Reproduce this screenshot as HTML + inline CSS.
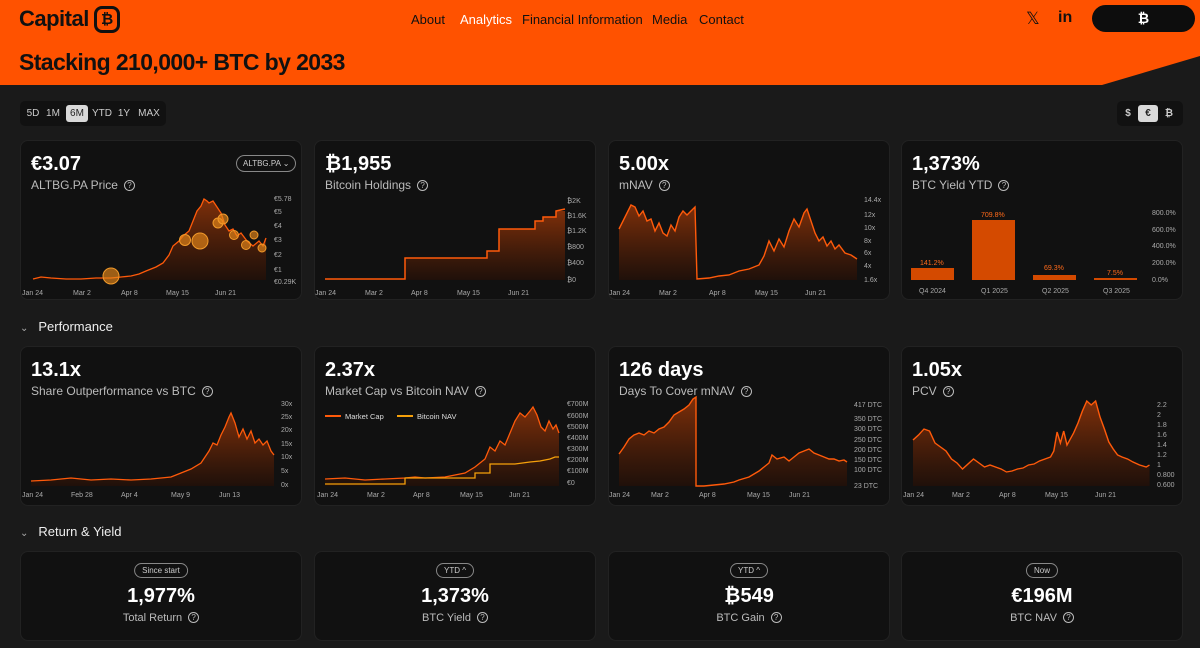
<!DOCTYPE html>
<html><head><meta charset="utf-8"><style>
*{box-sizing:border-box;margin:0;padding:0}
body{width:1200px;height:648px;overflow:hidden;background:#1a1a1a;font-family:"Liberation Sans",sans-serif;color:#fff;position:relative}
.hdr{position:absolute;left:0;top:0;width:1200px;height:85px;background:#ff5200;clip-path:polygon(0 0,1200px 0,1200px 56px,1102px 85px,0 85px)}
.logo{position:absolute;left:19px;top:5px;height:28px;display:flex;align-items:center;font-size:22px;font-weight:bold;color:#111;letter-spacing:-0.5px}
.logo b{display:inline-block;margin-left:5px;width:26px;height:27px;border:3px solid #111;border-radius:8px;text-align:center;font-size:15px;line-height:21px}
.nav{position:absolute;top:12px;font-size:13px;color:#111}
.title{position:absolute;left:19px;top:49px;font-size:23px;font-weight:bold;color:#111;letter-spacing:-0.6px}
.btn{position:absolute;left:1092px;top:5px;width:103px;height:27px;background:#0d0d0d;border-radius:14px;text-align:center;line-height:27px;font-weight:bold;font-size:14px}
.seg{position:absolute;background:#111;border-radius:5px;height:25px;font-size:10px;color:#ccc}
.seg span{position:absolute;top:4px;height:17px;line-height:17px;text-align:center}
.seg .on{background:#d9d9d9;color:#222;border-radius:3px}
.card{position:absolute;width:282px;height:160px;background:#111;border:1px solid #222;border-radius:8px;overflow:hidden}
.big{position:absolute;left:10px;top:12px;font-size:20px;font-weight:bold}
.sub{position:absolute;left:10px;top:37px;font-size:12px;color:#bbb}
.q{display:inline-block;width:11px;height:11px;border:1px solid #bbb;border-radius:50%;font-size:8px;text-align:center;line-height:10px;margin-left:6px;vertical-align:1px}
svg{position:absolute;left:0;top:0}
svg text{font-family:"Liberation Sans",sans-serif;font-size:7px;fill:#aaa}
.sec{position:absolute;left:20px;font-size:13px;color:#eee}
.sec i{font-style:normal;font-size:10px;color:#aaa;margin-right:10px}
.c3{height:90px;text-align:center}
.pill{position:absolute;left:50%;transform:translateX(-50%);top:11px;border:1px solid #888;border-radius:9px;font-size:8px;padding:2px 7px;color:#ccc}
.c3 .v{position:absolute;width:100%;top:33px;font-size:20px;font-weight:bold}
.c3 .l{position:absolute;width:100%;top:60px;font-size:11px;color:#bbb}
</style></head><body>
<div class="hdr"></div>
<div class="logo">Capital<b>₿</b></div>
<div class="nav" style="left:411px">About</div>
<div class="nav" style="left:460px;color:#fff">Analytics</div>
<div class="nav" style="left:522px">Financial Information</div>
<div class="nav" style="left:652px">Media</div>
<div class="nav" style="left:699px">Contact</div>
<div class="nav" style="left:1026px;top:9px;font-size:17px">𝕏</div>
<div class="nav" style="left:1058px;top:9px;font-size:16px;font-weight:bold">in</div>
<div class="btn">₿</div>
<div class="title">Stacking 210,000+ BTC by 2033</div>

<div class="seg" style="left:20px;top:101px;width:146px">
<span style="left:5px;width:16px">5D</span><span style="left:25px;width:16px">1M</span><span class="on" style="left:46px;width:22px">6M</span><span style="left:71px;width:22px">YTD</span><span style="left:96px;width:16px">1Y</span><span style="left:116px;width:26px">MAX</span></div>
<div class="seg" style="left:1117px;top:101px;width:66px;font-weight:bold">
<span style="left:4px;width:14px">$</span><span class="on" style="left:21px;width:20px">€</span><span style="left:45px;width:14px">₿</span></div>

<svg width="0" height="0"><defs><linearGradient id="g" x1="0" y1="0" x2="0" y2="1"><stop offset="0" stop-color="#a33a08" stop-opacity=".75"/><stop offset="1" stop-color="#2a1005" stop-opacity=".6"/></linearGradient></defs></svg>

<!-- Row 1 -->
<div class="card" style="left:20px;top:140px">
<div class="big">€3.07</div><div class="sub">ALTBG.PA Price<span class="q">?</span></div>
<div style="position:absolute;left:215px;top:14px;border:1px solid #888;border-radius:9px;font-size:8px;padding:3px 6px;color:#ccc">ALTBG.PA ⌄</div>
<svg width="282" height="160">
<polygon fill="url(#g)" points="12,138 20,136 30,137 45,138 60,138 75,137 90,137 100,136 110,135 118,133 125,130 135,126 142,122 148,114 152,105 158,100 162,95 168,90 172,80 176,70 180,65 183,58 186,60 188,62 192,60 196,66 200,72 204,84 208,90 212,88 216,95 220,92 226,100 232,105 238,100 242,105 245,97 245,139 12,139"/>
<polyline fill="none" stroke="#ff5a0a" stroke-width="1.3" points="12,138 20,136 30,137 45,138 60,138 75,137 90,137 100,136 110,135 118,133 125,130 135,126 142,122 148,114 152,105 158,100 162,95 168,90 172,80 176,70 180,65 183,58 186,60 188,62 192,60 196,66 200,72 204,84 208,90 212,88 216,95 220,92 226,100 232,105 238,100 242,105 245,97"/>
<g fill="#e8891a" fill-opacity=".65" stroke="#f29a2a" stroke-width="1"><circle cx="90" cy="135" r="8"/><circle cx="164" cy="99" r="5.5"/><circle cx="179" cy="100" r="8"/><circle cx="197" cy="82" r="5"/><circle cx="202" cy="78" r="5"/><circle cx="213" cy="94" r="4.5"/><circle cx="225" cy="104" r="4.5"/><circle cx="233" cy="94" r="4"/><circle cx="241" cy="107" r="4"/></g>
<g><text x="253" y="60">€5.78</text><text x="253" y="73">€5</text><text x="253" y="87">€4</text><text x="253" y="101">€3</text><text x="253" y="116">€2</text><text x="253" y="131">€1</text><text x="253" y="143">€0.29K</text></g>
<g><text x="1" y="154">Jan 24</text><text x="52" y="154">Mar 2</text><text x="100" y="154">Apr 8</text><text x="145" y="154">May 15</text><text x="194" y="154">Jun 21</text></g>
</svg></div>

<div class="card" style="left:314px;top:140px">
<div class="big">₿1,955</div><div class="sub">Bitcoin Holdings<span class="q">?</span></div>
<svg width="282" height="160">
<polygon fill="url(#g)" points="10,138 90,138 90,117 172,117 172,110 184,110 184,88 220,88 220,80 228,80 228,76 241,76 241,70 250,70 250,139 10,139"/>
<polyline fill="none" stroke="#ff5a0a" stroke-width="1.5" points="10,138 90,138 90,117 172,117 172,110 184,110 184,88 220,88 220,80 228,80 228,76 241,76 241,70 250,68"/>
<g><text x="252" y="62">₿2K</text><text x="252" y="77">₿1.6K</text><text x="252" y="92">₿1.2K</text><text x="252" y="108">₿800</text><text x="252" y="124">₿400</text><text x="252" y="141">₿0</text></g>
<g><text x="0" y="154">Jan 24</text><text x="50" y="154">Mar 2</text><text x="96" y="154">Apr 8</text><text x="142" y="154">May 15</text><text x="193" y="154">Jun 21</text></g>
</svg></div>

<div class="card" style="left:608px;top:140px">
<div class="big">5.00x</div><div class="sub">mNAV<span class="q">?</span></div>
<svg width="282" height="160">
<polygon fill="url(#g)" points="10,88 14,80 18,72 22,64 26,66 30,75 34,70 38,80 42,78 46,90 50,82 54,92 58,95 62,84 66,90 70,76 74,70 78,74 82,70 86,66 88,138 100,137 110,135 120,134 130,130 140,128 150,124 155,115 160,100 165,110 170,98 175,106 180,90 185,78 190,86 195,72 198,68 202,80 206,92 210,100 214,96 218,105 222,100 226,108 230,104 236,112 242,114 248,118 248,139 10,139"/>
<polyline fill="none" stroke="#ff5a0a" stroke-width="1.4" points="10,88 14,80 18,72 22,64 26,66 30,75 34,70 38,80 42,78 46,90 50,82 54,92 58,95 62,84 66,90 70,76 74,70 78,74 82,70 86,66 88,138 100,137 110,135 120,134 130,130 140,128 150,124 155,115 160,100 165,110 170,98 175,106 180,90 185,78 190,86 195,72 198,68 202,80 206,92 210,100 214,96 218,105 222,100 226,108 230,104 236,112 242,114 248,118"/>
<g><text x="255" y="61">14.4x</text><text x="255" y="76">12x</text><text x="255" y="89">10x</text><text x="255" y="102">8x</text><text x="255" y="114">6x</text><text x="255" y="127">4x</text><text x="255" y="141">1.6x</text></g>
<g><text x="0" y="154">Jan 24</text><text x="50" y="154">Mar 2</text><text x="100" y="154">Apr 8</text><text x="146" y="154">May 15</text><text x="196" y="154">Jun 21</text></g>
</svg></div>

<div class="card" style="left:901px;top:140px">
<div class="big">1,373%</div><div class="sub">BTC Yield YTD<span class="q">?</span></div>
<svg width="282" height="160">
<g fill="#d44a00"><rect x="9" y="127" width="43" height="12"/><rect x="70" y="79" width="43" height="60"/><rect x="131" y="134" width="43" height="5"/><rect x="192" y="137" width="43" height="2"/></g>
<g style="font-size:7.5px"><text x="18" y="124" style="fill:#ff6a1a">141.2%</text><text x="79" y="76" style="fill:#ff6a1a">709.8%</text><text x="142" y="129" style="fill:#ff6a1a">69.3%</text><text x="205" y="134" style="fill:#ff6a1a">7.5%</text></g>
<g><text x="17" y="152">Q4 2024</text><text x="79" y="152">Q1 2025</text><text x="140" y="152">Q2 2025</text><text x="201" y="152">Q3 2025</text></g>
<g><text x="250" y="74">800.0%</text><text x="250" y="91">600.0%</text><text x="250" y="107">400.0%</text><text x="250" y="124">200.0%</text><text x="250" y="141">0.0%</text></g>
</svg></div>

<div class="sec" style="top:319px"><i>⌄</i>Performance</div>

<!-- Row 2 -->
<div class="card" style="left:20px;top:346px">
<div class="big">13.1x</div><div class="sub">Share Outperformance vs BTC<span class="q">?</span></div>
<svg width="282" height="160">
<polygon fill="url(#g)" points="10,134 30,133 50,131 70,133 90,132 110,133 130,132 150,130 160,126 170,122 180,116 188,104 192,96 196,98 200,88 204,80 208,70 210,66 214,76 218,90 222,82 226,92 230,84 234,96 238,92 242,98 246,94 250,104 253,108 253,139 10,139"/>
<polyline fill="none" stroke="#ff5a0a" stroke-width="1.3" points="10,134 30,133 50,131 70,133 90,132 110,133 130,132 150,130 160,126 170,122 180,116 188,104 192,96 196,98 200,88 204,80 208,70 210,66 214,76 218,90 222,82 226,92 230,84 234,96 238,92 242,98 246,94 250,104 253,108"/>
<g><text x="260" y="59">30x</text><text x="260" y="72">25x</text><text x="260" y="85">20x</text><text x="260" y="99">15x</text><text x="260" y="112">10x</text><text x="260" y="126">5x</text><text x="260" y="140">0x</text></g>
<g><text x="1" y="150">Jan 24</text><text x="50" y="150">Feb 28</text><text x="100" y="150">Apr 4</text><text x="150" y="150">May 9</text><text x="198" y="150">Jun 13</text></g>
</svg></div>

<div class="card" style="left:314px;top:346px">
<div class="big">2.37x</div><div class="sub">Market Cap vs Bitcoin NAV<span class="q">?</span></div>
<svg width="282" height="160">
<polygon fill="url(#g)" points="10,132 30,131 50,133 70,132 90,131 100,130 110,131 130,130 140,128 150,126 160,120 170,112 175,100 180,104 185,94 190,98 195,86 200,74 205,66 210,70 215,64 218,60 222,68 226,80 230,84 234,74 238,82 241,78 244,86 244,139 10,139"/>
<polyline fill="none" stroke="#ff5a0a" stroke-width="1.3" points="10,132 30,131 50,133 70,132 90,131 100,130 110,131 130,130 140,128 150,126 160,120 170,112 175,100 180,104 185,94 190,98 195,86 200,74 205,66 210,70 215,64 218,60 222,68 226,80 230,84 234,74 238,82 241,78 244,86"/>
<polyline fill="none" stroke="#f5a00a" stroke-width="1.3" points="10,137 90,137 90,131 160,131 160,126 175,126 175,117 200,117 215,115 225,114 235,112 240,110 244,110"/>
<line x1="10" y1="69" x2="26" y2="69" stroke="#ff5a0a" stroke-width="2"/><text x="30" y="72" style="fill:#ddd;font-size:7.5px">Market Cap</text>
<line x1="82" y1="69" x2="98" y2="69" stroke="#f5a00a" stroke-width="2"/><text x="102" y="72" style="fill:#ddd;font-size:7.5px">Bitcoin NAV</text>
<g><text x="252" y="59">€700M</text><text x="252" y="71">€600M</text><text x="252" y="82">€500M</text><text x="252" y="93">€400M</text><text x="252" y="104">€300M</text><text x="252" y="115">€200M</text><text x="252" y="126">€100M</text><text x="252" y="138">€0</text></g>
<g><text x="2" y="150">Jan 24</text><text x="52" y="150">Mar 2</text><text x="98" y="150">Apr 8</text><text x="145" y="150">May 15</text><text x="194" y="150">Jun 21</text></g>
</svg></div>

<div class="card" style="left:608px;top:346px">
<div class="big">126 days</div><div class="sub">Days To Cover mNAV<span class="q">?</span></div>
<svg width="282" height="160">
<polygon fill="url(#g)" points="10,107 15,100 20,92 25,88 30,86 35,88 40,84 45,86 50,82 55,80 60,75 65,68 70,65 75,62 80,58 84,52 87,50 87,139 95,139 105,138 115,137 125,135 130,133 140,130 150,124 155,120 160,116 163,108 168,112 175,110 180,114 185,110 190,106 195,104 200,102 205,106 210,108 215,110 220,112 225,112 230,114 235,113 238,115 238,139 10,139"/>
<polyline fill="none" stroke="#ff5a0a" stroke-width="1.4" points="10,107 15,100 20,92 25,88 30,86 35,88 40,84 45,86 50,82 55,80 60,75 65,68 70,65 75,62 80,58 84,52 87,50 87,139 95,139 105,138 115,137 125,135 130,133 140,130 150,124 155,120 160,116 163,108 168,112 175,110 180,114 185,110 190,106 195,104 200,102 205,106 210,108 215,110 220,112 225,112 230,114 235,113 238,115"/>
<g><text x="245" y="60">417 DTC</text><text x="245" y="74">350 DTC</text><text x="245" y="84">300 DTC</text><text x="245" y="95">250 DTC</text><text x="245" y="105">200 DTC</text><text x="245" y="115">150 DTC</text><text x="245" y="125">100 DTC</text><text x="245" y="141">23 DTC</text></g>
<g><text x="0" y="150">Jan 24</text><text x="42" y="150">Mar 2</text><text x="90" y="150">Apr 8</text><text x="138" y="150">May 15</text><text x="180" y="150">Jun 21</text></g>
</svg></div>

<div class="card" style="left:901px;top:346px">
<div class="big">1.05x</div><div class="sub">PCV<span class="q">?</span></div>
<svg width="282" height="160">
<g transform="scale(1.1,1)">
<polygon fill="url(#g)" points="10,93 15,88 20,82 25,84 30,96 35,100 40,104 45,112 50,116 55,122 60,117 65,112 70,116 75,120 80,118 85,120 90,122 95,125 100,124 105,122 110,121 115,118 120,117 125,114 130,112 135,110 138,104 141,85 144,96 147,84 150,98 153,92 156,86 160,76 164,64 168,54 172,58 176,54 180,70 184,82 188,95 192,102 196,108 200,110 205,112 210,115 216,118 222,120 225,118 225,139 10,139"/>
<polyline fill="none" stroke="#ff5a0a" stroke-width="1.3" points="10,93 15,88 20,82 25,84 30,96 35,100 40,104 45,112 50,116 55,122 60,117 65,112 70,116 75,120 80,118 85,120 90,122 95,125 100,124 105,122 110,121 115,118 120,117 125,114 130,112 135,110 138,104 141,85 144,96 147,84 150,98 153,92 156,86 160,76 164,64 168,54 172,58 176,54 180,70 184,82 188,95 192,102 196,108 200,110 205,112 210,115 216,118 222,120 225,118"/>
</g>
<g><text x="255" y="60">2.2</text><text x="255" y="70">2</text><text x="255" y="80">1.8</text><text x="255" y="90">1.6</text><text x="255" y="100">1.4</text><text x="255" y="110">1.2</text><text x="255" y="120">1</text><text x="255" y="130">0.800</text><text x="255" y="140">0.600</text></g>
<g><text x="1" y="150">Jan 24</text><text x="50" y="150">Mar 2</text><text x="97" y="150">Apr 8</text><text x="143" y="150">May 15</text><text x="193" y="150">Jun 21</text></g>
</svg></div>

<div class="sec" style="top:524px"><i>⌄</i>Return &amp; Yield</div>

<!-- Row 3 -->
<div class="card c3" style="left:20px;top:551px"><div class="pill">Since start</div><div class="v">1,977%</div><div class="l">Total Return<span class="q">?</span></div></div>
<div class="card c3" style="left:314px;top:551px"><div class="pill">YTD ^</div><div class="v">1,373%</div><div class="l">BTC Yield<span class="q">?</span></div></div>
<div class="card c3" style="left:608px;top:551px"><div class="pill">YTD ^</div><div class="v">₿549</div><div class="l">BTC Gain<span class="q">?</span></div></div>
<div class="card c3" style="left:901px;top:551px"><div class="pill">Now</div><div class="v">€196M</div><div class="l">BTC NAV<span class="q">?</span></div></div>
</body></html>
